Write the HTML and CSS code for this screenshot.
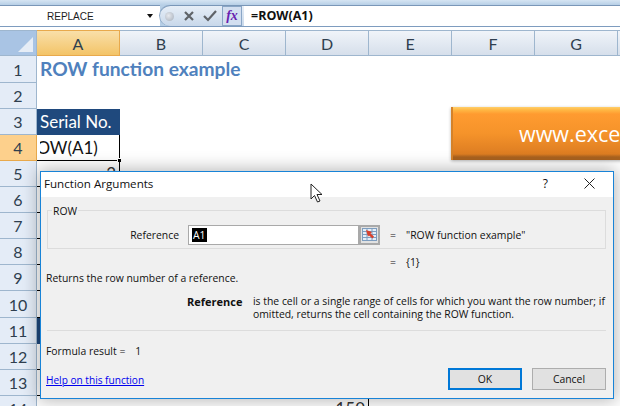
FILE: index.html
```html
<!DOCTYPE html>
<html lang="en">
<head>
  <meta charset="UTF-8" />
  <title>ROW function example</title>
  <link rel="stylesheet" href="styles.css">
</head>
<body>
  <div class="app">
    <div class="formula-bar">
      <div class="name-box">
        <span class="name-text">REPLACE</span>
        <span class="name-arrow"></span>
      </div>
      <div class="formula-tools">
        <span class="knob"></span>
        <svg class="tool-x" width="14" height="14" viewBox="0 0 14 14"><path d="M3 3l8 8M11 3l-8 8" stroke="#5f6368" stroke-width="2.2" fill="none"/></svg>
        <svg class="tool-check" width="16" height="14" viewBox="0 0 16 14"><path d="M2 7l4 4 8-9" stroke="#5f6368" stroke-width="2.2" fill="none"/></svg>
        <span class="fx-btn">fx</span>
      </div>
      <div class="formula-text">=ROW(A1)</div>
    </div>

    <div class="col-heads">
      <div class="corner"><span class="corner-mark"></span></div>
      <div class="col-head active">A</div>
      <div class="col-head">B</div>
      <div class="col-head">C</div>
      <div class="col-head">D</div>
      <div class="col-head">E</div>
      <div class="col-head">F</div>
      <div class="col-head">G</div>
      <div class="col-head"></div>
    </div>

    <div class="sheet">
      <div class="row tall"><div class="row-head">1</div><div class="cell title">ROW function example</div></div>
      <div class="row"><div class="row-head">2</div></div>
      <div class="row"><div class="row-head">3</div><div class="cell th">Serial No.</div></div>
      <div class="row"><div class="row-head active">4</div><div class="cell editing"><span class="edit-text">=ROW(A1)</span><span class="handle"></span></div></div>
      <div class="row"><div class="row-head">5</div><div class="cell boxed num">2</div></div>
      <div class="row"><div class="row-head">6</div><div class="cell boxed"></div></div>
      <div class="row"><div class="row-head">7</div><div class="cell boxed"></div></div>
      <div class="row"><div class="row-head">8</div><div class="cell boxed"></div></div>
      <div class="row"><div class="row-head">9</div><div class="cell boxed"></div></div>
      <div class="row tall"><div class="row-head">10</div><div class="cell boxed"></div></div>
      <div class="row"><div class="row-head">11</div><div class="cell th"></div></div>
      <div class="row"><div class="row-head">12</div><div class="cell boxed"></div></div>
      <div class="row"><div class="row-head">13</div><div class="cell boxed"></div></div>
      <div class="row"><div class="row-head">14</div><div class="cell"></div><div class="cell"></div><div class="cell"></div><div class="cell boxed num">150</div></div>
    </div>

    <div class="banner"><span class="banner-text">www.exce</span></div>

    <div class="dialog">
      <div class="dialog-title">
        <span>Function Arguments</span>
        <div class="title-btns">
          <span class="help-btn">?</span>
          <svg width="11" height="11" viewBox="0 0 11 11"><path d="M.5.5l10 10M10.500.5l-10 10" stroke="#222" stroke-width="1" fill="none"/></svg>
        </div>
      </div>
      <div class="dialog-body">
        <div class="group">
          <div class="group-name">ROW</div>
          <div class="arg-row">
            <span class="arg-label">Reference</span>
            <div class="arg-input"><span class="selected">A1</span></div>
            <div class="picker">
              <svg width="15" height="13" viewBox="0 0 15 13">
                <rect x=".5" y=".5" width="14" height="12" fill="#e4edf7" stroke="#7d9dbf"/>
                <path d="M.5 3.500h14M.5 6.500h14M.5 9.500h14M5 .5v12M10 .5v12" stroke="#7d9dbf" fill="none"/>
                <path d="M4 2l6 2-1.500 1.500 3.500 3-1.500 2-3.500-3L6 8.500z" fill="#d8412c"/>
              </svg>
            </div>
            <span class="eq">=</span>
            <span>"ROW function example"</span>
          </div>
        </div>
        <div class="result-row"><span class="eq">=</span><span>{1}</span></div>
        <p class="summary">Returns the row number of a reference.</p>
        <div class="detail">
          <b class="detail-name">Reference</b>
          <p class="detail-text">is the cell or a single range of cells for which you want the row number; if omitted, returns the cell containing the ROW function.</p>
        </div>
        <div class="separator"></div>
        <div class="formula-result"><span>Formula result =</span><span>1</span></div>
        <div class="dialog-foot">
          <a class="help-link" href="#">Help on this function</a>
          <div class="buttons">
            <button class="btn primary">OK</button>
            <button class="btn">Cancel</button>
          </div>
        </div>
      </div>
    </div>

    <svg class="cursor" width="14" height="21" viewBox="0 0 14 21"><path d="M1 1v15l3.500-3.500 3 6.500 2.500-1-3-6.500h5z" fill="#fff" stroke="#222" stroke-width="1"/></svg>
  </div>
</body>
</html>
```

FILE: styles.css
```css
* {
  margin: 0;
  padding: 0;
  box-sizing: border-box;
}

html, body {
  width: 620px;
  height: 406px;
  overflow: hidden;
  background: #fff;
}

.app {
  position: relative;
  width: 620px;
  height: 406px;
  overflow: hidden;
  font-family: "Lato", sans-serif;
  color: #333;
}

/* Formula bar */
.formula-bar {
  display: flex;
  height: 27px;
  margin-bottom: 3px;
  padding-top: 5px;
  background: linear-gradient(#d6e5f3, #b7cfe6 5px);
  border-bottom: 1px solid #7e9cbf;
}

.name-box {
  display: flex;
  align-items: center;
  width: 160px;
  padding: 0 5px 0 47px;
  background: #fff;
  border-top: 1px solid #7a97b8;
  font-family: "Liberation Sans", sans-serif;
  font-size: 10px;
  color: #1c1c1c;
}

.name-text {
  flex: 1;
}

.name-arrow {
  border: 3.5px solid transparent;
  border-top: 4px solid #111;
  border-bottom: 0;
  margin-right: 2px;
}

.formula-tools {
  display: flex;
  align-items: center;
  width: 84px;
  padding-left: 5px;
  background: linear-gradient(#e6eef7, #c8d8ea);
  border-top: 1px solid #7a97b8;
  border-radius: 11px 0 0 11px;
  box-shadow: -1px 0 0 #8fa9c6;
}

.knob {
  width: 9px;
  height: 9px;
  border-radius: 50%;
  background: radial-gradient(circle at 40% 40%, #e6e9ee, #a4adb9);
}

.tool-x {
  margin-left: 8px;
}

.tool-check {
  margin-left: 6px;
}

.fx-btn {
  display: flex;
  align-items: center;
  justify-content: center;
  width: 20px;
  height: 20px;
  margin-left: 4px;
  background: #d3dff0;
  border: 1px solid #8aa6c6;
  font-family: "Liberation Serif", serif;
  font-weight: bold;
  font-style: italic;
  font-size: 14px;
  color: #6a1fb0;
}

.formula-text {
  flex: 1;
  padding-left: 7px;
  background: #fff;
  border-top: 1px solid #7a97b8;
  font-family: "Open Sans", sans-serif;
  font-weight: bold;
  font-size: 12.5px;
  line-height: 19px;
  color: #111;
}

/* Column and row headers */
.col-heads {
  display: grid;
  grid-template-columns: 37px repeat(8, 83px);
  height: 26px;
}

.corner {
  position: relative;
  background: #a9c4e4;
  border-right: 1px solid #9eb6ce;
  border-top: 1px solid #9eb6ce;
  border-bottom: 1px solid #9eb6ce;
}

.corner-mark {
  position: absolute;
  right: 3px;
  bottom: 3px;
  width: 0;
  height: 0;
  border-left: 15px solid transparent;
  border-bottom: 15px solid #e6edf6;
}

.col-head {
  display: flex;
  align-items: center;
  justify-content: center;
  background: linear-gradient(#f0f4f9, #d6dfeb);
  border-top: 1px solid #9eb6ce;
  border-right: 1px solid #9eb6ce;
  border-bottom: 1px solid #9eb6ce;
  font-size: 16px;
  color: #2f3f4f;
}

.col-head.active {
  background: linear-gradient(#f9dfa9, #f3c468);
  border-color: #e8a94c;
}

.row {
  display: grid;
  grid-template-columns: 37px repeat(8, 83px);
  height: 26px;
}

.row.tall {
  height: 27px;
}

.row-head {
  display: flex;
  align-items: center;
  justify-content: center;
  background: #e4ecf7;
  border-right: 1px solid #9eb6ce;
  border-bottom: 1px solid #9eb6ce;
  font-size: 16px;
  color: #2f3f4f;
}

.row-head.active {
  background: #fdd08c;
  border-color: #e8a94c;
}

/* Cells */
.cell {
  position: relative;
  padding-left: 3px;
  font-size: 17px;
  line-height: 25px;
  white-space: nowrap;
  overflow: hidden;
}

.title {
  overflow: visible;
  font-weight: bold;
  font-size: 19.2px;
  color: #4f81bd;
}

.th {
  background: #1f497d;
  color: #fff;
}

.editing {
  overflow: visible;
  border-right: 1px solid #000;
  border-bottom: 1px solid #000;
}

.edit-text {
  display: block;
  overflow: hidden;
  text-indent: -24px;
  color: #111;
}

.handle {
  position: absolute;
  right: -3px;
  bottom: -3px;
  width: 5px;
  height: 5px;
  background: #000;
  border: 1px solid #fff;
}

.boxed {
  border-right: 1px solid #000;
  border-bottom: 1px solid #000;
}

.num {
  padding-right: 3px;
  text-align: right;
}

/* Banner */
.banner {
  position: absolute;
  left: 451px;
  top: 107px;
  width: 240px;
  height: 53px;
  padding-left: 66px;
  background: linear-gradient(#ffcf6b, #ffb743 3px, #ff9b30 7px, #f5932a 50%, #dd7d22 47px, #a9621f 50px);
  border-left: 2px solid #d4822a;
  font-family: "Open Sans", sans-serif;
  font-size: 21.5px;
  line-height: 53px;
  color: #fff;
  box-shadow: 0 1px 3px rgba(0, 0, 0, 0.3);
}

/* Function Arguments dialog */
.dialog {
  position: absolute;
  left: 40px;
  top: 171px;
  width: 574px;
  height: 228px;
  background: #f0f0f0;
  border: 1px solid #1883d7;
  box-shadow: 0 0 16px 2px rgba(0, 0, 0, 0.28);
  font-family: "Open Sans", sans-serif;
  font-size: 10.4px;
  color: #111;
}

.dialog-title {
  display: flex;
  align-items: center;
  justify-content: space-between;
  height: 25px;
  padding: 0 18px 2px 3px;
  background: #fff;
  font-size: 11.6px;
}

.title-btns {
  display: flex;
  align-items: center;
  gap: 36px;
}

.help-btn {
  font-size: 12px;
}

.dialog-body {
  padding: 13px 7px 0 6px;
}

.group {
  position: relative;
  height: 39px;
  border: 1px solid #dcdcdc;
}

.group-name {
  position: absolute;
  left: 4px;
  top: -7px;
  padding: 0 1px;
  background: #f0f0f0;
  line-height: 14px;
}

.arg-row {
  display: flex;
  align-items: center;
  height: 21px;
  margin-top: 13px;
}

.arg-label {
  width: 131px;
  text-align: right;
}

.arg-input {
  display: flex;
  align-items: center;
  width: 171px;
  height: 20px;
  margin-left: 9px;
  padding-left: 3px;
  background: #fff;
  border: 1px solid #a9a9a9;
}

.selected {
  padding: 0 1px;
  background: #000;
  color: #fff;
  line-height: 14px;
}

.picker {
  display: flex;
  align-items: center;
  justify-content: center;
  width: 21px;
  height: 20px;
  background: #e1e1e1;
  border: 2px solid #a9a9a9;
}

.eq {
  width: 16px;
  margin-left: 10px;
}

.result-row {
  display: flex;
  margin: 5px 0 0 333px;
  line-height: 16px;
}

.summary {
  margin-left: -1px;
  line-height: 16px;
}

.detail {
  display: flex;
  margin-top: 9px;
  line-height: 13px;
}

.detail-name {
  width: 200px;
  padding-left: 140px;
  flex-shrink: 0;
  font-size: 11px;
}

.detail-text {
  flex: 1;
  margin-left: 6px;
}

.separator {
  height: 1px;
  margin-top: 9px;
  background: #dcdcdc;
}

.formula-result {
  display: flex;
  gap: 10px;
  margin: 12px 0 0 -1px;
  line-height: 16px;
}

.dialog-foot {
  display: flex;
  align-items: flex-end;
  justify-content: space-between;
  margin-top: 9px;
}

.help-link {
  margin: 0 0 2px -1px;
  color: #0000ee;
  font-size: 10.1px;
  line-height: 16px;
}

.buttons {
  display: flex;
  gap: 10px;
}

.btn {
  width: 74px;
  height: 22px;
  background: #e1e1e1;
  border: 1px solid #adadad;
  font-family: "Open Sans", sans-serif;
  font-size: 10.4px;
  color: #111;
}

.btn.primary {
  border: 2px solid #0078d7;
}

.cursor {
  position: absolute;
  left: 310px;
  top: 183px;
}
```
